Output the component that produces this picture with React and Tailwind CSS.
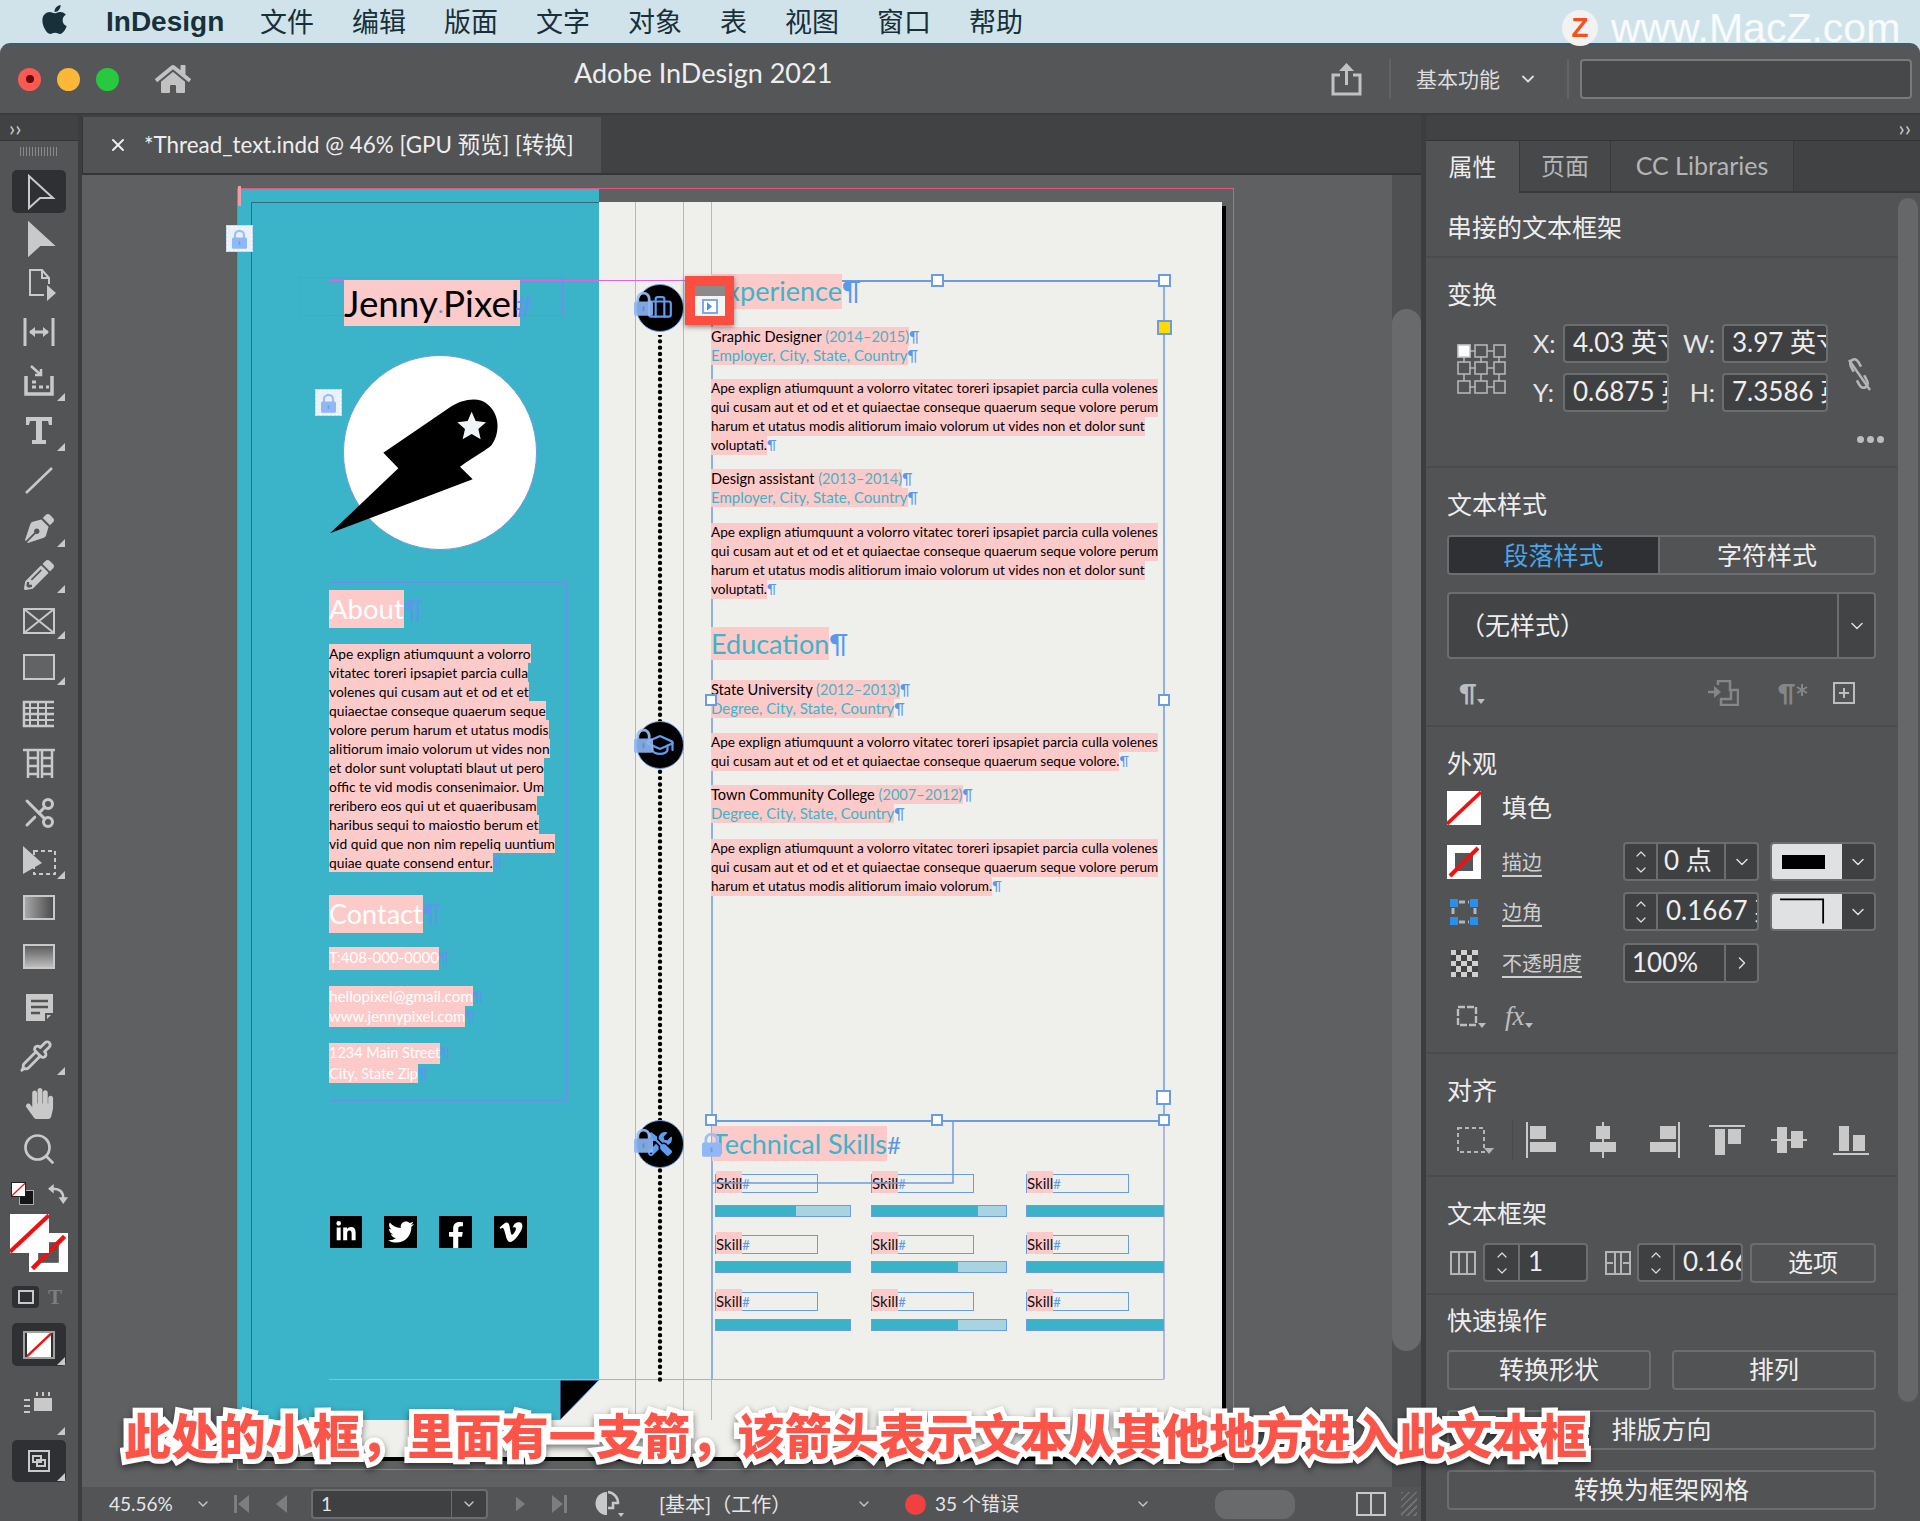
import { ChevronDown, ChevronUp, ChevronRight, Scissors, Pipette, Search, Briefcase, GraduationCap, X } from 'lucide-react';
import { FaApple, FaHome, FaPenNib, FaPencilAlt, FaHandPaper, FaTools, FaLinkedinIn, FaTwitter, FaFacebookF, FaVimeoV } from 'react-icons/fa';

const PINK = 'bg-[#fdcaca]';

// --- small drawings shared by toolbar and panel ---
function NoneSwatch({ className }) {
  return (
    <svg viewBox="0 0 34 34" className={className}>
      <rect width="34" height="34" fill="#fff" />
      <line x1="0" y1="33" x2="34" y2="1" stroke="#f01010" strokeWidth="3.5" />
    </svg>
  );
}

function StrokeSwatch({ className }) {
  return (
    <svg viewBox="0 0 34 34" className={className}>
      <rect width="34" height="34" fill="#fff" />
      <rect x="8" y="8" width="18" height="18" fill="#555658" />
      <line x1="3" y1="31" x2="31" y2="3" stroke="#f01010" strokeWidth="4" />
    </svg>
  );
}

function Corner() {
  return (
    <svg viewBox="0 0 8 8" className="absolute right-[13px] bottom-[5px] w-[8px] h-[8px]">
      <polygon points="8,0 8,8 0,8" fill="#c9c9c9" />
    </svg>
  );
}

function Tool({ className, corner, children }) {
  return (
    <div className={`relative flex items-center justify-center ${className}`}>
      {children}
      {corner && <Corner />}
    </div>
  );
}

function Ico({ children }) {
  return (
    <svg viewBox="0 0 36 36" className="w-[36px] h-[36px]" fill="none" stroke="#c9c9c9" strokeWidth="2">
      {children}
    </svg>
  );
}

function Toolbar() {
  return (
    <div className="w-[78px] h-full bg-[#535456] flex flex-col border-r-[4px] border-[#3c3d3f] box-content shrink-0">
      <div className="h-[26px] bg-[#414244] border-b border-[#333436] flex items-center pl-[9px] text-[#c9c9c9] text-[22px] leading-none">››</div>
      <div className="h-[29px] pt-[6px] flex justify-center">
        <div className="w-[38px] h-[9px] bg-[repeating-linear-gradient(90deg,#8a8a8a_0,#8a8a8a_1px,transparent_1px,transparent_3px)]" />
      </div>
      <Tool className="h-[46px]">
        <div className="absolute left-[12px] top-0 w-[54px] h-[43px] rounded-[5px] bg-[#2f3033]" />
        <div className="relative -mt-[3px]"><Ico><path d="M8 2V34L19 24H32Z" /></Ico></div>
      </Tool>
      <Tool className="h-[46px]"><Ico><path d="M8 2V34L19 24H32Z" fill="#c9c9c9" /></Ico></Tool>
      <Tool className="h-[46px]"><Ico><path d="M23 28H9V3H21L28 11V17M21 3V11H28" /><path d="M26 18V34L35 26Z" fill="#c9c9c9" stroke="none" /></Ico></Tool>
      <Tool className="h-[48px]"><Ico><path d="M4 4V32M32 4V32M9 18H27" strokeWidth="3" /><path d="M8 18L14 13V23ZM28 18L22 13V23Z" fill="#c9c9c9" stroke="none" /></Ico></Tool>
      <Tool className="h-[50px]" corner><Ico><path d="M5 13V31H31V13" strokeWidth="3.5" /><path d="M10 3L20 12M20 6V12H14" strokeWidth="2.5" /><path d="M11 24H15M18 24H22M25 24H28M11 19H15" strokeWidth="3" /></Ico></Tool>
      <Tool className="h-[50px]" corner><Ico><path d="M5 4H31V12H28L27 8H21V27H25V31H11V27H15V8H9L8 12H5Z" fill="#c9c9c9" stroke="none" /></Ico></Tool>
      <Tool className="h-[48px]"><Ico><line x1="5" y1="31" x2="31" y2="6" strokeWidth="2.5" /></Ico></Tool>
      <Tool className="h-[48px]" corner><FaPenNib className="w-[29px] h-[29px] text-[#c9c9c9]" /></Tool>
      <Tool className="h-[46px]" corner><FaPencilAlt className="w-[30px] h-[30px] text-[#c9c9c9]" /></Tool>
      <Tool className="h-[46px]" corner><Ico><rect x="3" y="6" width="30" height="24" /><path d="M3 6L33 30M33 6L3 30" /></Ico></Tool>
      <Tool className="h-[46px]" corner><Ico><rect x="3" y="6" width="30" height="24" fill="#626365" /></Ico></Tool>
      <Tool className="h-[48px]"><Ico><path d="M33 6H3V30H33M3 18H33" strokeWidth="2.5" /><path d="M9 7V29M17 7V29M25 7V29M3 12H33M3 24H33" strokeWidth="2" /></Ico></Tool>
      <Tool className="h-[50px]"><Ico><path d="M2 5H34M7 5V33M17 5V33M21 5V33M31 5V33M7 13H17M7 21H17M7 29H17M21 13H31M21 21H31M21 29H31" strokeWidth="2.5" /></Ico></Tool>
      <Tool className="h-[50px]"><Scissors className="w-[36px] h-[36px] text-[#c9c9c9] -scale-x-100" strokeWidth={2} /></Tool>
      <Tool className="h-[46px]" corner><Ico><path d="M2 3V31L21 20Z" fill="#c9c9c9" stroke="none" /><rect x="13" y="8" width="21" height="23" strokeDasharray="4 3" /></Ico></Tool>
      <Tool className="h-[46px]"><div className="w-[32px] h-[25px] border-2 border-[#c9c9c9] bg-linear-to-r from-[#a8a8a8] to-[#4d4d4d]" /></Tool>
      <Tool className="h-[52px]"><div className="w-[32px] h-[25px] border-2 border-[#c9c9c9] bg-linear-to-b from-[#5e5e5e] to-[#bdbdbd]" /></Tool>
      <Tool className="h-[50px]"><Ico><path d="M5 5H32V24L24 32H5Z" fill="#c9c9c9" stroke="none" /><path d="M10 12H27M10 18H27M10 24H19" stroke="#535456" strokeWidth="2.5" /><path d="M25 32V25H32" stroke="#535456" /></Ico></Tool>
      <Tool className="h-[48px]" corner><Pipette className="w-[34px] h-[34px] text-[#c9c9c9] -ml-[6px]" strokeWidth={2} /></Tool>
      <Tool className="h-[46px]"><FaHandPaper className="w-[31px] h-[31px] text-[#c9c9c9]" /></Tool>
      <Tool className="h-[46px]"><Search className="w-[36px] h-[36px] text-[#c9c9c9]" strokeWidth={1.8} /></Tool>
      <div className="h-[42px] relative flex items-center pl-[11px] gap-[14px]">
        <div className="relative w-[23px] h-[23px]">
          <div className="absolute right-0 bottom-0 w-[15px] h-[15px] bg-[#151515] border border-[#aaa]" />
          <NoneSwatch className="absolute left-0 top-0 w-[15px] h-[15px] border border-[#222]" />
        </div>
        <svg viewBox="0 0 22 22" className="w-[21px] h-[21px]"><path d="M5 6C12 6 16 9 16 16" fill="none" stroke="#c9c9c9" strokeWidth="2.5" /><path d="M0 6L6 1V11ZM16 22L11 15H21Z" fill="#c9c9c9" /></svg>
      </div>
      <div className="relative h-[65px]">
        <StrokeSwatch className="absolute left-[29px] top-[19px] w-[39px] h-[39px]" />
        <NoneSwatch className="absolute left-[10px] top-0 w-[39px] h-[39px]" />
      </div>
      <div className="h-[32px] pt-[4px] flex items-center pl-[12px]">
        <div className="w-[27px] h-[22px] rounded-[4px] bg-[#2f3033] flex items-center justify-center"><div className="w-[16px] h-[14px] border-2 border-[#c9c9c9]" /></div>
        <span className="ml-[9px] text-[#7d7e80] text-[21px] font-bold leading-none font-['Liberation_Serif',serif]">T</span>
      </div>
      <div className="mt-[12px] mx-[12px] relative h-[43px] rounded-[5px] bg-[#2f3033] flex items-center justify-center">
        <NoneSwatch className="w-[32px] h-[28px] border-2 border-[#a0a0a0]" />
        <svg viewBox="0 0 8 8" className="absolute right-[1px] bottom-[1px] w-[8px] h-[8px]"><polygon points="8,0 8,8 0,8" fill="#c9c9c9" /></svg>
      </div>
      <Tool className="h-[74px]" corner><svg viewBox="0 0 30 24" className="w-[30px] h-[24px] mr-[2px]"><rect x="11" y="7" width="18" height="13" fill="#c9c9c9" /><path d="M1 9H7M1 15H7M1 21H7M14 1V5M20 1V5M26 1V5" stroke="#c9c9c9" strokeWidth="2" /></svg></Tool>
      <div className="mx-[12px] relative h-[42px] rounded-[5px] bg-[#2f3033] flex items-center justify-center">
        <svg viewBox="0 0 22 22" className="w-[22px] h-[22px]" fill="none" stroke="#c9c9c9" strokeWidth="2"><rect x="1" y="1" width="20" height="20" /><rect x="5" y="6" width="8" height="6" /><rect x="9" y="10" width="8" height="6" /></svg>
        <svg viewBox="0 0 8 8" className="absolute right-[1px] bottom-[1px] w-[8px] h-[8px]"><polygon points="8,0 8,8 0,8" fill="#c9c9c9" /></svg>
      </div>
    </div>
  );
}

// --- document on the pasteboard. Coordinates are page pixels: the Spread wrapper undoes the canvas offset ---
function Pil({ c = '¶', className = '' }) {
  return <span className={`text-[#5b97ea] ${className}`}>{c}</span>;
}

function Line({ children, mark, color = 'text-black', className = 'h-[19px]', text = 'text-[13.6px] leading-[19px]' }) {
  return (
    <div className={`${className} whitespace-nowrap ${color}`}>
      <span className={`inline-block h-full ${PINK} ${text}`}>{children}</span>
      {mark && <Pil c={mark} className={text} />}
    </div>
  );
}

const LEFT_PARA = [
  'Ape explign atiumquunt a volorro',
  'vitatec toreri ipsapiet parcia culla',
  'volenes qui cusam aut et od et et',
  'quiaectae conseque quaerum seque',
  'volore perum harum et utatus modis',
  'alitiorum imaio volorum ut vides non',
  'et dolor sunt voluptati blaut ut pero',
  'offic te vid modis consenimaior. Um',
  'reribero eos qui ut et quaeribusam',
  'haribus sequi to maiostio berum et',
  'vid quid que non nim repeliq uuntium',
  'quiae quate consend entur.',
];

const HEAD = 'text-[27px] leading-[34px]';

function LeftColumn() {
  const white = 'text-white';
  const small = 'text-[15px] leading-[20px]';
  return (
    <div className="absolute left-[329px] top-[590px] w-[238px]">
      <Line color={white} className="h-[38px]" text="text-[27.500px] leading-[38px]" mark="¶">About</Line>
      <div className="mt-[13px]">
        {LEFT_PARA.map((l, i) => (
          <Line key={l} text="text-[13.800px] leading-[19px]" mark={i === 11 ? '¶' : null}>{l}</Line>
        ))}
      </div>
      <Line color={white} className="h-[38px] mt-[26px]" text="text-[27px] leading-[38px]" mark="¶">Contact</Line>
      <Line color={white} className="h-[23px] mt-[12px]" text={small} mark="¶">T:408-000-0000</Line>
      <Line color={white} className="h-[20px] mt-[16px]" text="text-[15.300px] leading-[20px]" mark="¶">hellopixel@gmail.com</Line>
      <Line color={white} className="h-[21px]" text={small} mark="¶">www.jennypixel.com</Line>
      <Line color={white} className="h-[21px] mt-[15px]" text="text-[14.500px] leading-[20px]" mark="¶">1234 Main Street</Line>
      <Line color={white} className="h-[19px]" text="text-[14.500px] leading-[19px]" mark="¶">City, State Zip</Line>
    </div>
  );
}

function Year({ children }) {
  return <span className="text-[#4cb2c6]">{children}</span>;
}

function Body({ lines, className = '' }) {
  return (
    <div className={className}>
      {lines.map((l, i) => (
        <Line key={i} mark={i === lines.length - 1 ? '¶' : null}>{l}</Line>
      ))}
    </div>
  );
}

function Entry({ title, year, place, className }) {
  return (
    <div className={className}>
      <Line mark="¶" text="text-[14.600px] leading-[19px]">{title} <Year>{year}</Year></Line>
      <Line color="text-[#3cb4c9]" mark="¶" text="text-[15px] leading-[19px]">{place}</Line>
    </div>
  );
}

const P1 = 'Ape explign atiumquunt a volorro vitatec toreri ipsapiet parcia culla volenes';
const P2 = 'qui cusam aut et od et et quiaectae conseque quaerum seque volore perum';
const P3 = 'harum et utatus modis alitiorum imaio volorum ut vides non et dolor sunt';

function RightColumn() {
  const teal = 'text-[#3cb4c9]';
  return (
    <div className="absolute left-[711px] top-[274px] w-[454px]">
      <Line color={teal} className="h-[35px]" text={HEAD} mark="¶">Experience</Line>
      <Entry className="mt-[15px]" title="Graphic Designer" year="(2014–2015)" place="Employer, City, State, Country" />
      <Body className="mt-[13px]" lines={[P1, P2, P3, 'voluptati.']} />
      <Entry className="mt-[15px]" title="Design assistant" year="(2013–2014)" place="Employer, City, State, Country" />
      <Body className="mt-[15px]" lines={[P1, P2, P3, 'voluptati.']} />
      <Line color={teal} className="h-[33px] mt-[32px]" text={HEAD} mark="¶">Education</Line>
      <Entry className="mt-[17px]" title="State University" year="(2012–2013)" place="Degree, City, State, Country" />
      <Body className="mt-[14px]" lines={[P1, 'qui cusam aut et od et et quiaectae conseque quaerum seque volore.']} />
      <Entry className="mt-[15px]" title="Town Community College" year="(2007–2012)" place="Degree, City, State, Country" />
      <Body className="mt-[15px]" lines={[P1, P2, 'harum et utatus modis alitiorum imaio volorum.']} />
    </div>
  );
}

const SKILLS = [
  { fills: ['w-[60%]', 'w-[79%]', 'w-full'], row: 'h-[61px]', gap: 'mt-[12px]' },
  { fills: ['w-full', 'w-[64%]', 'w-full'], row: 'h-[57px]', gap: 'mt-[7px]' },
  { fills: ['w-full', 'w-[64%]', 'w-full'], row: 'h-[57px]', gap: 'mt-[8px]' },
];

function SkillGrid() {
  return (
    <div className="absolute left-[715px] top-[1174px] w-[449px]">
      {SKILLS.map((r, i) => (
        <div key={i} className={`grid grid-cols-[156px_155px_138px] ${r.row}`}>
          {r.fills.map((f, j) => (
            <div key={j}>
              <div className="relative w-[103px] h-[19px] border border-[#6a9de0]">
                <div className="absolute left-0 -top-[4px] h-[22px] text-[15px] leading-[24px] text-[#111] whitespace-nowrap">
                  <span className={`inline-block h-full ${PINK}`}>Skill</span><Pil c="#" className="text-[13px]" />
                </div>
              </div>
              <div className={`${r.gap} h-[12px] bg-[#a8d4e1] border border-[#6a9de0] ${j === 2 ? 'w-[138px]' : 'w-[136px]'}`}>
                <div className={`h-full bg-[#3ab3c9] ${f}`} />
              </div>
            </div>
          ))}
        </div>
      ))}
    </div>
  );
}

function Lock({ className }) {
  return (
    <svg viewBox="0 0 20 26" className={className}>
      <path d="M4 13V8a6 6 0 0 1 12 0v5" fill="none" stroke="#9cc0f5" strokeWidth="3" />
      <rect x="0" y="11" width="20" height="15" rx="2" fill="#8fb8f5" />
      <rect x="9" y="16" width="2" height="5" fill="#6c9de6" />
    </svg>
  );
}

function LockTag({ className }) {
  return (
    <div className={`absolute w-[27px] h-[27px] bg-[#eaf1fb] border-2 border-dotted border-white outline outline-1 -outline-offset-1 outline-[#a9c8f5]/60 flex items-center justify-center ${className}`}>
      <Lock className="w-[15px] h-[20px]" />
    </div>
  );
}

function Handle({ className }) {
  return <div className={`absolute bg-white border-2 border-[#6a9de0] ${className}`} />;
}

function Badge({ className, children }) {
  return (
    <div className={`absolute left-[636px] w-[48px] h-[48px] rounded-full bg-black border border-[#6a9de0] flex items-center justify-center text-[#5f9bee] ${className}`}>
      {children}
    </div>
  );
}

function Spread() {
  return (
    <div className="absolute -left-[82px] -top-[175px] w-[1920px] h-[1521px]">
      <div className="absolute left-[237px] top-[188px] w-[997px] h-[1282px] border border-[#e4587f]" />
      <div className="absolute left-[251px] top-[202px] w-[971px] h-[1255px] bg-[#eff0ec] shadow-[4px_4px_0_#000]" />
      <div className="absolute left-[238px] top-[189px] w-[361px] h-[1231px] bg-[#3bb3c9]" />
      <div className="absolute left-[251px] top-[202px] w-[348px] h-[1218px] border-l border-t border-[#2c6f7d]" />
      <svg viewBox="0 0 40 40" className="absolute left-[560px] top-[1380px] w-[40px] h-[40px]">
        <polygon points="39,0 40,40 0,40" fill="#eff0ec" />
        <polygon points="0,0 39,0 0,40" fill="#000" stroke="#6a9de0" strokeWidth="1" />
      </svg>

      {/* guides */}
      <div className="absolute left-[635px] top-[202px] w-px h-[1218px] bg-[#4fe3ea]" />
      <div className="absolute left-[683px] top-[202px] w-px h-[1218px] bg-[#4fe3ea]" />
      <div className="absolute left-[711px] top-[202px] w-px h-[1218px] bg-[#4fe3ea]" />
      <div className="absolute left-[329px] top-[280px] w-[385px] h-px bg-[#e85fe6]" />
      <div className="absolute left-[329px] top-[1379px] w-[835px] h-px bg-[#e88ae6]" />
      <div className="absolute left-[329px] top-[280px] w-px h-[1099px] bg-[#7f8df0]" />

      {/* logo */}
      <div className="absolute left-[343px] top-[355px] w-[194px] h-[195px] rounded-full bg-white border border-[#6a9de0]" />
      <svg viewBox="0 0 510 420" className="absolute left-[330px] top-[395px] w-[170px] h-[140px]">
        <path d="M0 415L205 220L160 173L360 37C400 10 450 5 475 30C510 60 510 115 485 150C470 165 440 180 390 215L428 253Z" fill="#000" />
        <polygon points="425,50 437,78 468,82 445,102 452,133 425,117 398,133 405,102 382,82 413,78" fill="#eff4f8" />
      </svg>

      {/* name */}
      <div className="absolute left-[299px] top-[277px] w-[264px] h-[39px] border border-[#6a8fe8]" />
      <div className="absolute left-[344px] top-[280px] h-[46px] whitespace-nowrap text-black">
        <span className={`inline-block h-full text-[36.800px] leading-[46px] ${PINK}`}>Jenny<Pil c="·" className="text-[20px]" />Pixel</span><Pil c="#" className="text-[30px] leading-[46px] -ml-[4px]" />
      </div>

      {/* text frames */}
      <div className="absolute left-[329px] top-[582px] w-[238px] h-[519px] border-t border-r border-b border-[#6a8fe8]" />
      <LeftColumn />
      <div className="absolute left-[711px] top-[280px] w-[454px] h-[840px] border-2 border-[#8fb0e0] border-b-0" />
      <div className="absolute left-[711px] top-[280px] w-[454px] h-[2px] bg-[#6a9de0]" />
      <RightColumn />
      <div className="absolute left-[711px] top-[1120px] w-[454px] h-[259px] border-t-2 border-l-2 border-r-2 border-t-[#6a9de0] border-l-[#8fb0e0] border-r-[#b0b8dc]" />
      <div className="absolute left-[712px] top-[1126px] h-[35px] whitespace-nowrap text-[#3cb4c9] text-[27px] leading-[35px]">
        <span className={`inline-block h-full ${PINK}`}>Technical Skills</span><Pil c="#" className="text-[24px]" />
      </div>
      <SkillGrid />
      <svg viewBox="0 0 242 64" className="absolute left-[712px] top-[1120px] w-[242px] h-[64px]" fill="none" stroke="#6a9de0" strokeWidth="1.5">
        <path d="M0 63H241V0" />
      </svg>

      {/* timeline */}
      <svg viewBox="0 0 6 1050" className="absolute left-[657px] top-[335px] w-[6px] h-[1050px]">
        <line x1="3" y1="0" x2="3" y2="1050" stroke="#000" strokeWidth="4.4" strokeLinecap="round" strokeDasharray="0 6.33" />
      </svg>
      <Badge className="top-[284px]"><Briefcase className="w-[26px] h-[26px]" strokeWidth={2} /></Badge>
      <Badge className="top-[721px]"><GraduationCap className="w-[30px] h-[30px]" strokeWidth={1.8} /></Badge>
      <Badge className="top-[1120px]"><FaTools className="w-[24px] h-[24px]" /></Badge>
      <Lock className="absolute left-[634px] top-[291px] w-[19px] h-[25px] opacity-90" />
      <Lock className="absolute left-[634px] top-[728px] w-[19px] h-[25px] opacity-90" />
      <Lock className="absolute left-[634px] top-[1128px] w-[19px] h-[25px] opacity-90" />
      <Lock className="absolute left-[702px] top-[1132px] w-[19px] h-[25px]" />

      <LockTag className="left-[226px] top-[225px]" />
      <LockTag className="left-[315px] top-[389px]" />
      <div className="absolute left-[238px] top-[186px] w-[3px] h-[20px] bg-[#f29aa6]" />

      {/* social */}
      <div className="absolute left-[330px] top-[1216px] flex gap-[22px]">
        <div className="w-[32px] h-[32px] bg-black flex items-center justify-center text-white"><FaLinkedinIn className="w-[22px] h-[22px]" /></div>
        <div className="w-[33px] h-[32px] bg-black flex items-center justify-center text-white"><FaTwitter className="w-[26px] h-[26px]" /></div>
        <div className="w-[33px] h-[32px] bg-black flex items-end justify-center text-white"><FaFacebookF className="w-[24px] h-[26px]" /></div>
        <div className="w-[33px] h-[32px] bg-black flex items-center justify-center text-white"><FaVimeoV className="w-[26px] h-[26px]" /></div>
      </div>

      {/* selection handles */}
      <Handle className="left-[931px] top-[274px] w-[13px] h-[13px]" />
      <Handle className="left-[1158px] top-[274px] w-[13px] h-[13px]" />
      <Handle className="left-[705px] top-[694px] w-[12px] h-[12px]" />
      <Handle className="left-[1158px] top-[694px] w-[12px] h-[12px]" />
      <Handle className="left-[1156px] top-[1090px] w-[15px] h-[15px]" />
      <Handle className="left-[705px] top-[1114px] w-[12px] h-[12px]" />
      <Handle className="left-[931px] top-[1114px] w-[12px] h-[12px]" />
      <Handle className="left-[1158px] top-[1114px] w-[12px] h-[12px]" />
      <div className="absolute left-[1157px] top-[320px] w-[15px] h-[15px] bg-[#ffdb00] border-2 border-[#6a9de0]" />

      {/* callout on the in-port */}
      <div className="absolute left-[685px] top-[276px] w-[49px] h-[49px] bg-[#fb4e41] shadow-[0_2px_5px_rgba(0,0,0,0.45)] flex flex-col items-center pt-[10px]">
        <div className="w-[30px] h-[10px] bg-[#8a8a88]" />
        <div className="w-[30px] h-[20px] bg-[#f4f4f2] flex items-center justify-center">
          <div className="w-[16px] h-[15px] bg-white border-2 border-[#7fa8e8] flex items-center justify-center">
            <svg viewBox="0 0 6 10" className="w-[5px] h-[9px]"><polygon points="0,0 6,5 0,10" fill="#4f8de8" /></svg>
          </div>
        </div>
      </div>
    </div>
  );
}

// --- right panel ---
function Title({ children, className = '' }) {
  return <div className={`text-[25px] leading-[25px] text-[#eeeeee] ${className}`}>{children}</div>;
}

function Field({ children }) {
  return (
    <div className="h-[39px] rounded-[4px] border-2 border-[#6c6d6f] bg-[#3f4042] pl-[8px] text-[26px] leading-[33px] text-[#eee] overflow-hidden whitespace-nowrap">
      {children}
    </div>
  );
}

function Stepper({ value, w, split }) {
  return (
    <div className={`${w} h-[39px] rounded-[4px] border-2 border-[#6c6d6f] bg-[#3f4042] flex items-stretch overflow-hidden shrink-0`}>
      <div className={`${split} border-r-2 border-[#6c6d6f] flex flex-col items-center justify-center text-[#ddd] shrink-0`}>
        <ChevronUp className="w-[22px] h-[16px]" strokeWidth={1.8} />
        <ChevronDown className="w-[22px] h-[16px]" strokeWidth={1.8} />
      </div>
      <div className="flex-1 min-w-0 pl-[8px] text-[26px] leading-[33px] text-[#eee] whitespace-nowrap overflow-hidden">{value}</div>
    </div>
  );
}

function PanelChevron() {
  return <ChevronDown className="w-[20px] h-[20px] text-[#ddd]" strokeWidth={1.8} />;
}

function UnitStepper({ value }) {
  return (
    <div className="w-[136px] h-[39px] rounded-[4px] border-2 border-[#6c6d6f] bg-[#3f4042] flex items-stretch overflow-hidden shrink-0">
      <div className="w-[33px] border-r-2 border-[#6c6d6f] flex flex-col items-center justify-center text-[#ddd] shrink-0">
        <ChevronUp className="w-[22px] h-[16px]" strokeWidth={1.8} />
        <ChevronDown className="w-[22px] h-[16px]" strokeWidth={1.8} />
      </div>
      <div className="w-[66px] pl-[6px] text-[26px] leading-[33px] text-[#eee] whitespace-nowrap overflow-hidden">{value}</div>
      <div className="flex-1 border-l-2 border-[#6c6d6f] flex items-center justify-center"><PanelChevron /></div>
    </div>
  );
}

function Preview({ children }) {
  return (
    <div className="w-[106px] h-[39px] rounded-[4px] border-2 border-[#6c6d6f] bg-[#3f4042] flex overflow-hidden ml-[11px] shrink-0">
      <div className="w-[70px] bg-[#e0e1e3] relative flex items-center justify-center">{children}</div>
      <div className="flex-1 flex items-center justify-center"><PanelChevron /></div>
    </div>
  );
}

function Btn({ children, className = '' }) {
  return (
    <div className={`h-[40px] rounded-[4px] border-2 border-[#6c6d6f] flex items-center justify-center text-[25px] text-[#eee] ${className}`}>
      {children}
    </div>
  );
}

function AlignIcon({ children }) {
  return (
    <div className="w-[40px] h-[40px] flex items-center justify-center shrink-0">
      <svg viewBox="0 0 36 36" className="w-[36px] h-[36px]" fill="#c9c9c9">{children}</svg>
    </div>
  );
}

function Panel() {
  const dim = 'w-[34px] h-[34px]';
  const label = 'w-[121px] pl-[21px] box-content text-[20px] text-[#cfcfcf] underline underline-offset-[5px] shrink-0';
  return (
    <div className="relative w-[494px] h-full bg-[#525355] flex flex-col shrink-0">
      <div className="h-[26px] bg-[#414244] border-b border-[#333436] flex items-center justify-end pr-[9px] text-[#c9c9c9] text-[22px] leading-none">››</div>
      <div className="h-[52px] bg-[#414244] flex items-stretch border-b-2 border-[#38393b] text-[24px]">
        <div className="w-[93px] -mb-[2px] bg-[#525355] flex items-center justify-center text-[#eee]">属性</div>
        <div className="w-[92px] bg-[#47484a] border-l border-r border-[#38393b] flex items-center justify-center text-[#b5b5b5]">页面</div>
        <div className="w-[183px] bg-[#47484a] border-r border-[#38393b] flex items-center justify-center text-[#b5b5b5] text-[25px]">CC Libraries</div>
      </div>
      <div className="absolute right-[2px] top-[83px] w-[20px] h-[1204px] rounded-full bg-[#666769]" />

      <div className="w-[471px] flex flex-col">
        <div className="h-[65px] px-[21px] pt-[22px] box-border border-b-2 border-[#4a4b4d]">
          <Title>串接的文本框架</Title>
        </div>

        <div className="h-[210px] px-[21px] pt-[24px] box-border border-b-2 border-[#4a4b4d] relative">
          <Title>变换</Title>
          <div className="mt-[17px] flex">
            <svg viewBox="0 0 49 50" className="ml-[10px] mt-[20px] w-[49px] h-[50px] shrink-0" fill="none" stroke="#b5b5b5" strokeWidth="1.6">
              <path d="M12 7H19M30 7H37M7 12V19M7 30V37M24 12V19M24 30V37M42 12V19M42 30V37M12 24H19M30 24H37M12 43H19M30 43H37" />
              <rect x="18" y="1" width="12" height="12" /><rect x="37" y="1" width="11" height="12" />
              <rect x="1" y="18" width="12" height="12" /><rect x="18" y="18" width="12" height="12" /><rect x="37" y="18" width="11" height="12" />
              <rect x="1" y="37" width="12" height="12" /><rect x="18" y="37" width="12" height="12" /><rect x="37" y="37" width="11" height="12" />
              <rect x="1" y="1" width="12" height="12" fill="#fff" stroke="#c9c9c9" />
            </svg>
            <div className="ml-[27px] grid grid-cols-[30px_106px_53px_106px] gap-y-[10px] text-[25px] leading-[39px] text-[#e6e6e6]">
              <div>X:</div><Field>4.03 英寸</Field><div className="text-right pr-[7px]">W:</div><Field>3.97 英寸</Field>
              <div>Y:</div><Field>0.6875 英寸</Field><div className="text-right pr-[7px]">H:</div><Field>7.3586 英寸</Field>
            </div>
            <svg viewBox="0 0 26 40" className="ml-[18px] mt-[30px] w-[26px] h-[40px] shrink-0" fill="none" stroke="#b5b5b5" strokeWidth="2.6">
              <path d="M8 17L6 11C4 5 12 2 14 8L16 13" transform="rotate(-8 13 20)" />
              <path d="M10 26L12 31C14 37 22 34 20 28L18 22" transform="rotate(-8 13 20)" />
              <path d="M3 6L24 36" strokeWidth="2.4" />
            </svg>
          </div>
          <div className="absolute left-[431px] top-[178px] flex gap-[3px]">
            <div className="w-[7px] h-[7px] rounded-full bg-[#bdbdbd]" /><div className="w-[7px] h-[7px] rounded-full bg-[#bdbdbd]" /><div className="w-[7px] h-[7px] rounded-full bg-[#bdbdbd]" />
          </div>
        </div>

        <div className="h-[259px] px-[21px] pt-[24px] box-border border-b-2 border-[#4a4b4d]">
          <Title>文本样式</Title>
          <div className="mt-[18px] w-[429px] h-[40px] rounded-[4px] border-2 border-[#6c6d6f] flex text-[25px] leading-[36px] text-center overflow-hidden">
            <div className="w-[211px] bg-[#2f3033] text-[#4aa5e6] border-r-2 border-[#6c6d6f]">段落样式</div>
            <div className="flex-1 text-[#eee]">字符样式</div>
          </div>
          <div className="mt-[17px] w-[429px] h-[67px] rounded-[4px] border-2 border-[#6c6d6f] bg-[#434446] flex text-[25px] text-[#eee]">
            <div className="flex-1 flex items-center pl-[11px]">（无样式）</div>
            <div className="w-[37px] border-l-2 border-[#6c6d6f] flex items-center justify-center"><PanelChevron /></div>
          </div>
          <div className="mt-[22px] h-[24px] flex items-center relative">
            <span className="ml-[12px] text-[24px] leading-none text-[#bdbdbd] font-bold">¶</span>
            <svg viewBox="0 0 8 5" className="w-[8px] h-[5px] mt-[16px]"><polygon points="0,0 8,0 4,5" fill="#bdbdbd" /></svg>
            <svg viewBox="0 0 32 26" className="ml-[222px] w-[32px] h-[26px]" fill="none" stroke="#858688" strokeWidth="2.5">
              <path d="M11 5V1H23V10H31V25H14V19H24V10" /><path d="M1 12H10" /><path d="M7 6L14 12L7 18Z" fill="#858688" stroke="none" />
            </svg>
            <span className="ml-[39px] text-[24px] leading-none text-[#858688] font-bold">¶</span>
            <svg viewBox="0 0 14 14" className="w-[14px] h-[14px] -mt-[6px]" stroke="#858688" strokeWidth="2"><path d="M7 1V13M2 4L12 10M12 4L2 10" /></svg>
            <svg viewBox="0 0 22 22" className="ml-[24px] w-[22px] h-[22px]" fill="none" stroke="#bdbdbd" strokeWidth="2"><rect x="1" y="1" width="20" height="20" /><path d="M11 6V16M6 11H16" /></svg>
          </div>
        </div>

        <div className="h-[327px] px-[21px] pt-[24px] box-border border-b-2 border-[#4a4b4d]">
          <Title>外观</Title>
          <div className="mt-[15px] flex items-center h-[34px]">
            <NoneSwatch className={dim} />
            <div className="ml-[21px] text-[25px] text-[#eee]">填色</div>
          </div>
          <div className="mt-[17px] flex items-center h-[39px]">
            <StrokeSwatch className={dim} />
            <div className={label}>描边</div>
            <UnitStepper value="0 点" />
            <Preview><div className="w-[43px] h-[14px] bg-black -ml-[7px]" /></Preview>
          </div>
          <div className="mt-[11px] flex items-center h-[39px]">
            <svg viewBox="0 0 28 26" className="ml-[3px] mr-[3px] w-[28px] h-[26px]">
              <path d="M9 3H19M9 23H19M3 9V17M25 9V17" stroke="#b5b5b5" strokeWidth="3" strokeDasharray="6 3" />
              <rect x="0" y="0" width="8" height="8" fill="#2b8ee8" /><rect x="20" y="0" width="8" height="8" fill="#2b8ee8" />
              <rect x="0" y="18" width="8" height="8" fill="#2b8ee8" /><rect x="20" y="18" width="8" height="8" fill="#2b8ee8" />
            </svg>
            <div className={label}>边角</div>
            <Stepper value="0.1667 英寸" w="w-[136px]" split="w-[33px]" />
            <Preview><svg viewBox="0 0 70 39" className="w-[70px] h-[35px]" fill="none" stroke="#000" strokeWidth="2"><path d="M5 6H53V33" /></svg></Preview>
          </div>
          <div className="mt-[12px] flex items-center h-[40px]">
            <svg viewBox="0 0 5 5" className="ml-[3px] mr-[3px] w-[28px] h-[27px]" shapeRendering="crispEdges">
              <rect width="5" height="5" fill="#d0d0d0" />
              <path d="M1 0H2V1H1ZM3 0H4V1H3ZM0 1H1V2H0ZM2 1H3V2H2ZM4 1H5V2H4ZM1 2H2V3H1ZM3 2H4V3H3ZM0 3H1V4H0ZM2 3H3V4H2ZM4 3H5V4H4ZM1 4H2V5H1ZM3 4H4V5H3Z" fill="#444" />
            </svg>
            <div className={label}>不透明度</div>
            <div className="w-[136px] h-[40px] rounded-[4px] border-2 border-[#6c6d6f] bg-[#3f4042] flex">
              <div className="w-[99px] pl-[7px] text-[26px] leading-[34px] text-[#eee]">100%</div>
              <div className="flex-1 border-l-2 border-[#6c6d6f] flex items-center justify-center"><ChevronRight className="w-[20px] h-[20px] text-[#ddd]" strokeWidth={1.8} /></div>
            </div>
          </div>
          <div className="mt-[22px] h-[22px] flex items-center">
            <svg viewBox="0 0 22 22" className="ml-[9px] w-[22px] h-[22px]" fill="none" stroke="#bdbdbd" strokeWidth="2.4"><rect x="2" y="2" width="18" height="18" strokeDasharray="7 2" /></svg>
            <svg viewBox="0 0 8 5" className="w-[8px] h-[5px] mt-[18px]"><polygon points="0,0 8,0 4,5" fill="#bdbdbd" /></svg>
            <span className="ml-[19px] text-[27px] leading-none italic text-[#bdbdbd] font-['Liberation_Serif',serif]">fx</span>
            <svg viewBox="0 0 8 5" className="w-[8px] h-[5px] mt-[18px]"><polygon points="0,0 8,0 4,5" fill="#bdbdbd" /></svg>
          </div>
        </div>

        <div className="h-[123px] px-[21px] pt-[24px] box-border border-b-2 border-[#4a4b4d]">
          <Title>对齐</Title>
          <div className="mt-[17px] h-[40px] flex items-center">
            <svg viewBox="0 0 39 28" className="ml-[9px] w-[39px] h-[28px] shrink-0" fill="none" stroke="#b5b5b5" strokeWidth="2">
              <rect x="2" y="2" width="26" height="24" strokeDasharray="4 3" /><polygon points="28,22 38,22 33,28" fill="#b5b5b5" stroke="none" />
            </svg>
            <div className="ml-[17px] w-px h-[40px] bg-[#494a4c] shrink-0" />
            <div className="ml-[8px] flex gap-[22px]">
              <AlignIcon><rect x="3" y="0" width="2" height="36" /><rect x="7" y="4" width="16" height="13" /><rect x="7" y="20" width="26" height="10" /></AlignIcon>
              <AlignIcon><rect x="17" y="0" width="2" height="36" /><rect x="11" y="4" width="14" height="13" /><rect x="5" y="20" width="26" height="10" /></AlignIcon>
              <AlignIcon><rect x="31" y="0" width="2" height="36" /><rect x="13" y="4" width="16" height="13" /><rect x="3" y="20" width="26" height="10" /></AlignIcon>
              <AlignIcon><rect x="0" y="3" width="36" height="2" /><rect x="6" y="7" width="10" height="26" /><rect x="19" y="7" width="13" height="15" /></AlignIcon>
              <AlignIcon><rect x="0" y="17" width="36" height="2" /><rect x="6" y="5" width="10" height="26" /><rect x="20" y="9" width="12" height="17" /></AlignIcon>
              <AlignIcon><rect x="0" y="31" width="36" height="2" /><rect x="6" y="4" width="10" height="25" /><rect x="20" y="13" width="12" height="16" /></AlignIcon>
            </div>
          </div>
        </div>

        <div className="h-[118px] px-[21px] pt-[24px] box-border border-b-2 border-[#4a4b4d]">
          <Title>文本框架</Title>
          <div className="mt-[17px] h-[39px] flex items-center">
            <svg viewBox="0 0 26 24" className="ml-[3px] w-[26px] h-[24px] shrink-0" fill="none" stroke="#b5b5b5" strokeWidth="2"><rect x="1" y="1" width="24" height="22" /><path d="M9 1V23M17 1V23" /></svg>
            <div className="ml-[7px]"><Stepper value="1" w="w-[105px]" split="w-[35px]" /></div>
            <svg viewBox="0 0 26 24" className="ml-[17px] w-[26px] h-[24px] shrink-0" fill="none" stroke="#b5b5b5" strokeWidth="2"><rect x="1" y="1" width="24" height="22" /><path d="M10 1V23M16 1V23M2 12H8M18 12H24" /></svg>
            <div className="ml-[6px]"><Stepper value="0.1667 英寸" w="w-[106px]" split="w-[36px]" /></div>
            <Btn className="ml-[7px] w-[126px] h-[39px]">选项</Btn>
          </div>
        </div>

        <div className="px-[21px] pt-[13px]">
          <Title>快速操作</Title>
          <div className="mt-[17px] grid grid-cols-2 gap-x-[21px] w-[429px]">
            <Btn>转换形状</Btn>
            <Btn>排列</Btn>
          </div>
          <Btn className="mt-[20px] w-[429px]">排版方向</Btn>
          <Btn className="mt-[20px] w-[429px]">转换为框架网格</Btn>
        </div>
      </div>
    </div>
  );
}

function StatusBar() {
  const chev = <ChevronDown className="w-[16px] h-[16px] text-[#c9c9c9]" strokeWidth={2} />;
  return (
    <div className="h-[34px] bg-[#535456] flex items-center text-[19px] text-[#e6e6e6] whitespace-nowrap shrink-0">
      <span className="ml-[27px] w-[65px]">45.56%</span>
      <span className="ml-[21px]">{chev}</span>
      <svg viewBox="0 0 15 18" className="ml-[23px] w-[15px] h-[18px]" fill="#7d7e80"><rect width="3" height="18" /><polygon points="15,0 15,18 4,9" /></svg>
      <svg viewBox="0 0 11 18" className="ml-[27px] w-[11px] h-[18px]" fill="#7d7e80"><polygon points="11,0 11,18 0,9" /></svg>
      <div className="ml-[24px] w-[177px] h-[30px] rounded-[4px] border-2 border-[#6c6d6f] bg-[#3f4042] flex leading-[26px]">
        <div className="flex-1 pl-[8px]">1</div>
        <div className="w-[35px] border-l border-[#6c6d6f] flex items-center justify-center">{chev}</div>
      </div>
      <svg viewBox="0 0 11 18" className="ml-[28px] w-[9px] h-[18px]" fill="#7d7e80"><polygon points="0,0 0,18 11,9" /></svg>
      <svg viewBox="0 0 15 18" className="ml-[27px] w-[15px] h-[18px]" fill="#7d7e80"><rect x="12" width="3" height="18" /><polygon points="0,0 0,18 11,9" /></svg>
      <svg viewBox="0 0 30 28" className="ml-[27px] w-[30px] h-[28px]"><path d="M13 2A11.500 11.500 0 0 0 13 25Z" fill="#c9c9c9" /><path d="M14 2A11 11 0 0 1 24 13H19V18H14" fill="none" stroke="#c9c9c9" strokeWidth="2.5" /><polygon points="24,23 30,23 27,27" fill="#c9c9c9" /></svg>
      <span className="ml-[35px] w-[132px] text-[20px]">[基本]（工作）</span>
      <span className="ml-[65px]">{chev}</span>
      <div className="ml-[33px] w-[21px] h-[21px] rounded-full bg-[#f04040]" />
      <span className="ml-[9px] w-[90px]">35 个错误</span>
      <span className="ml-[110px]">{chev}</span>
      <div className="ml-[64px] w-[80px] h-[29px] rounded-[12px] bg-[#696a6c]" />
      <svg viewBox="0 0 30 24" className="ml-[61px] w-[30px] h-[24px]" fill="none" stroke="#c9c9c9" strokeWidth="2"><rect x="1" y="1" width="28" height="22" /><path d="M15 1V23" /></svg>
      <div className="ml-[15px] w-[16px] h-[24px] bg-[repeating-linear-gradient(135deg,#6f7072_0,#6f7072_2px,transparent_2px,transparent_5px)]" />
    </div>
  );
}

export default function App() {
  return (
    <div className="relative w-[1920px] h-[1521px] overflow-hidden bg-[#d0e3eb] flex flex-col font-['Lato','Noto_Sans_CJK_SC',sans-serif]">
      {/* mac menu bar */}
      <div className="h-[43px] flex items-center text-[#17303a] text-[27px] shrink-0">
        <FaApple className="ml-[39px] w-[31px] h-[33px] -mt-[4px]" />
        <span className="ml-[36px] w-[119px] font-bold text-[28px] font-['Liberation_Sans','Noto_Sans_CJK_SC',sans-serif]">InDesign</span>
        <div className="ml-[35px] flex gap-[38px] font-['Noto_Sans_CJK_SC',sans-serif] font-normal">
          <span>文件</span><span>编辑</span><span>版面</span><span>文字</span><span>对象</span><span>表</span><span>视图</span><span>窗口</span><span>帮助</span>
        </div>
      </div>

      {/* app window */}
      <div className="flex-1 min-h-0 rounded-t-[10px] border-t-2 border-[#44596a] bg-[#555658] flex flex-col">
        <div className="h-[70px] flex items-center shrink-0 border-b-2 border-[#3a3b3d]">
          <div className="ml-[18px] flex gap-[16px]">
            <div className="w-[23px] h-[23px] rounded-full bg-[#fa5a52] flex items-center justify-center"><div className="w-[8px] h-[8px] rounded-full bg-[#6b0a06]" /></div>
            <div className="w-[23px] h-[23px] rounded-full bg-[#fbb737]" />
            <div className="w-[23px] h-[23px] rounded-full bg-[#27c93f]" />
          </div>
          <FaHome className="ml-[36px] w-[36px] h-[32px] text-[#c2c2c2]" />
          <span className="ml-[383px] -mt-[12px] text-[27px] text-[#eeeeee] whitespace-nowrap">Adobe InDesign 2021</span>
          <svg viewBox="0 0 31 33" className="ml-auto w-[31px] h-[33px]" fill="none" stroke="#c2c2c2" strokeWidth="3">
            <path d="M9 12H2V31H29V12H22M15.500 22V3" /><path d="M15.500 0L23 8H8Z" fill="#c2c2c2" stroke="none" />
          </svg>
          <div className="ml-[27px] w-[2px] h-[40px] bg-[#626365]" />
          <span className="ml-[25px] text-[21px] text-[#dddddd] whitespace-nowrap">基本功能</span>
          <ChevronDown className="ml-[18px] w-[20px] h-[20px] text-[#dddddd]" strokeWidth={2.2} />
          <div className="ml-[29px] w-[2px] h-[40px] bg-[#626365]" />
          <div className="ml-[11px] mr-[8px] w-[332px] h-[40px] rounded-[4px] border-2 border-[#787a7c] bg-[#47484a]" />
        </div>

        <div className="flex-1 min-h-0 flex">
          <Toolbar />
          <div className="flex-1 min-w-0 flex flex-col">
            <div className="h-[60px] bg-[#414244] flex shrink-0 border-b-2 border-[#343537] pt-[2px]">
              <div className="w-[519px] bg-[#525355] flex items-center border-l border-[#333436] text-[22.400px] text-[#eeeeee] whitespace-nowrap">
                <X className="ml-[25px] w-[20px] h-[20px]" strokeWidth={2.4} />
                <span className="ml-[16px]">*Thread_text.indd @ 46% [GPU 预览] [转换]</span>
              </div>
            </div>
            <div className="flex-1 min-h-0 flex">
              <div className="relative flex-1 min-w-0 overflow-hidden bg-[#5f6062]"><Spread /></div>
              <div className="w-[29px] bg-[#4f5052] shrink-0">
                <div className="mt-[134px] h-[1042px] rounded-full bg-[#696a6c]" />
              </div>
            </div>
            <StatusBar />
          </div>
          <div className="w-[5px] bg-[#3c3d3f] shrink-0" />
          <Panel />
        </div>
      </div>

      {/* watermark */}
      <div className="absolute left-[1562px] top-[10px] flex items-center">
        <div className="w-[36px] h-[36px] rounded-full bg-[#f2f2f2] flex items-center justify-center text-[#f4511e] text-[28px] font-black leading-none font-['Liberation_Sans',sans-serif]">Z</div>
        <span className="ml-[13px] text-[41px] leading-[36px] text-white/85 font-['Liberation_Sans',sans-serif] whitespace-nowrap">www.MacZ.com</span>
      </div>

      {/* subtitle */}
      <div className="absolute left-[124px] top-[1402px] text-[47.200px] leading-[64px] font-black text-[#fa5548] whitespace-nowrap [-webkit-text-stroke:10px_#fff] [paint-order:stroke_fill] drop-shadow-[0_3px_3px_rgba(0,0,0,0.5)] font-['Noto_Sans_CJK_SC',sans-serif]">
        此处的小框，里面有一支箭，该箭头表示文本从其他地方进入此文本框
      </div>
    </div>
  );
}
